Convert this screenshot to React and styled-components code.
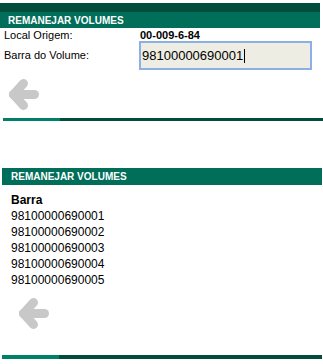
import React from "react";
import styled, { createGlobalStyle } from "styled-components";

const GlobalStyle = createGlobalStyle`
  html, body { margin: 0; padding: 0; background: #ffffff; }
  body { font-family: "Liberation Sans", Arial, sans-serif; color: #000; }
`;

const DARK = "#024c3b";
const GREEN = "#006e58";
const LIGHT = "#00806a";

const Page = styled.div`
  width: 323px;
  height: 364px;
  overflow: hidden;
`;

const Panel = styled.section`
  margin-top: ${(p) => p.$top}px;
  margin-left: ${(p) => p.$left}px;
  width: 320px;
`;

const TopBand = styled.div`
  height: 9px;
  background: ${DARK};
`;

const TitleBar = styled.div`
  height: ${(p) => p.$h}px;
  background: ${GREEN};
  color: #ffffff;
  font-weight: bold;
  font-size: 10px;
  display: flex;
  align-items: center;
  padding-left: ${(p) => p.$pad}px;
`;

const Form = styled.div`
  display: grid;
  grid-template-columns: 135px 173px;
  padding-left: 4px;
  font-size: 11px;
`;

const Label = styled.div`
  display: flex;
  align-items: ${(p) => (p.$center ? "center" : "flex-start")};
  padding-top: ${(p) => (p.$center ? 0 : 2)}px;
  line-height: 11px;
  height: ${(p) => (p.$center ? "auto" : "11px")};
`;

const Value = styled.div`
  font-weight: bold;
  padding-top: 2px;
  padding-left: 1px;
  line-height: 11px;
  height: 11px;
`;

const InputBox = styled.div`
  box-sizing: border-box;
  height: 29px;
  border: 2px solid #8cb0e6;
  background: #eeede3;
  font-size: 13px;
  display: flex;
  align-items: center;
  padding-left: 1px;
`;

const Caret = styled.span`
  display: inline-block;
  width: 1px;
  height: 14px;
  background: #000;
  margin-left: 1px;
`;

const BackButton = styled.button`
  display: block;
  border: 0;
  padding: 0;
  background: transparent;
  margin: ${(p) => p.$mt}px 0 0 ${(p) => p.$ml}px;
  width: 30px;
  height: 31px;
  cursor: pointer;
`;

const FooterBar = styled.div`
  display: flex;
  width: 320px;
  height: ${(p) => p.$h}px;
  margin-top: ${(p) => p.$mt}px;
  margin-left: ${(p) => p.$ml}px;
`;

const FooterLight = styled.div`
  width: 57px;
  background: ${LIGHT};
`;

const FooterDark = styled.div`
  flex: 1;
  background: ${DARK};
`;

const List = styled.div`
  padding: 7px 0 0 9px;
  font-size: 12px;
  line-height: 16px;
`;

const ListHead = styled.div`
  font-weight: bold;
`;

const Arrow = () => (
  <svg width="30" height="31" viewBox="0 0 30 31">
    <g
      fill="none"
      stroke="#c8c8c8"
      strokeWidth="9"
      strokeLinecap="round"
      strokeLinejoin="round"
    >
      <path d="M25.5 15.5H4.5" />
      <path d="M14.5 4.5L4.5 15.5L14.5 26.5" />
    </g>
  </svg>
);

const codes = [
  "98100000690001",
  "98100000690002",
  "98100000690003",
  "98100000690004",
  "98100000690005",
];

export default function App() {
  return (
    <Page>
      <GlobalStyle />
      <Panel $top={3} $left={0}>
        <TopBand />
        <TitleBar $h={16} $pad={8}>REMANEJAR VOLUMES</TitleBar>
        <Form>
          <Label>Local Origem:</Label>
          <Value>00-009-6-84</Value>
          <Label $center>Barra do Volume:</Label>
          <InputBox>
            98100000690001
            <Caret />
          </InputBox>
        </Form>
        <BackButton $mt={9} $ml={9} aria-label="Voltar">
          <Arrow />
        </BackButton>
        <FooterBar $h={3} $mt={8} $ml={3}>
          <FooterLight />
          <FooterDark />
        </FooterBar>
      </Panel>

      <Panel $top={47} $left={2}>
        <TitleBar $h={17} $pad={9}>REMANEJAR VOLUMES</TitleBar>
        <List>
          <ListHead>Barra</ListHead>
          {codes.map((c) => (
            <div key={c}>{c}</div>
          ))}
        </List>
        <BackButton $mt={10} $ml={17} aria-label="Voltar">
          <Arrow />
        </BackButton>
        <FooterBar $h={4} $mt={26} $ml={0}>
          <FooterLight />
          <FooterDark />
        </FooterBar>
      </Panel>
    </Page>
  );
}
